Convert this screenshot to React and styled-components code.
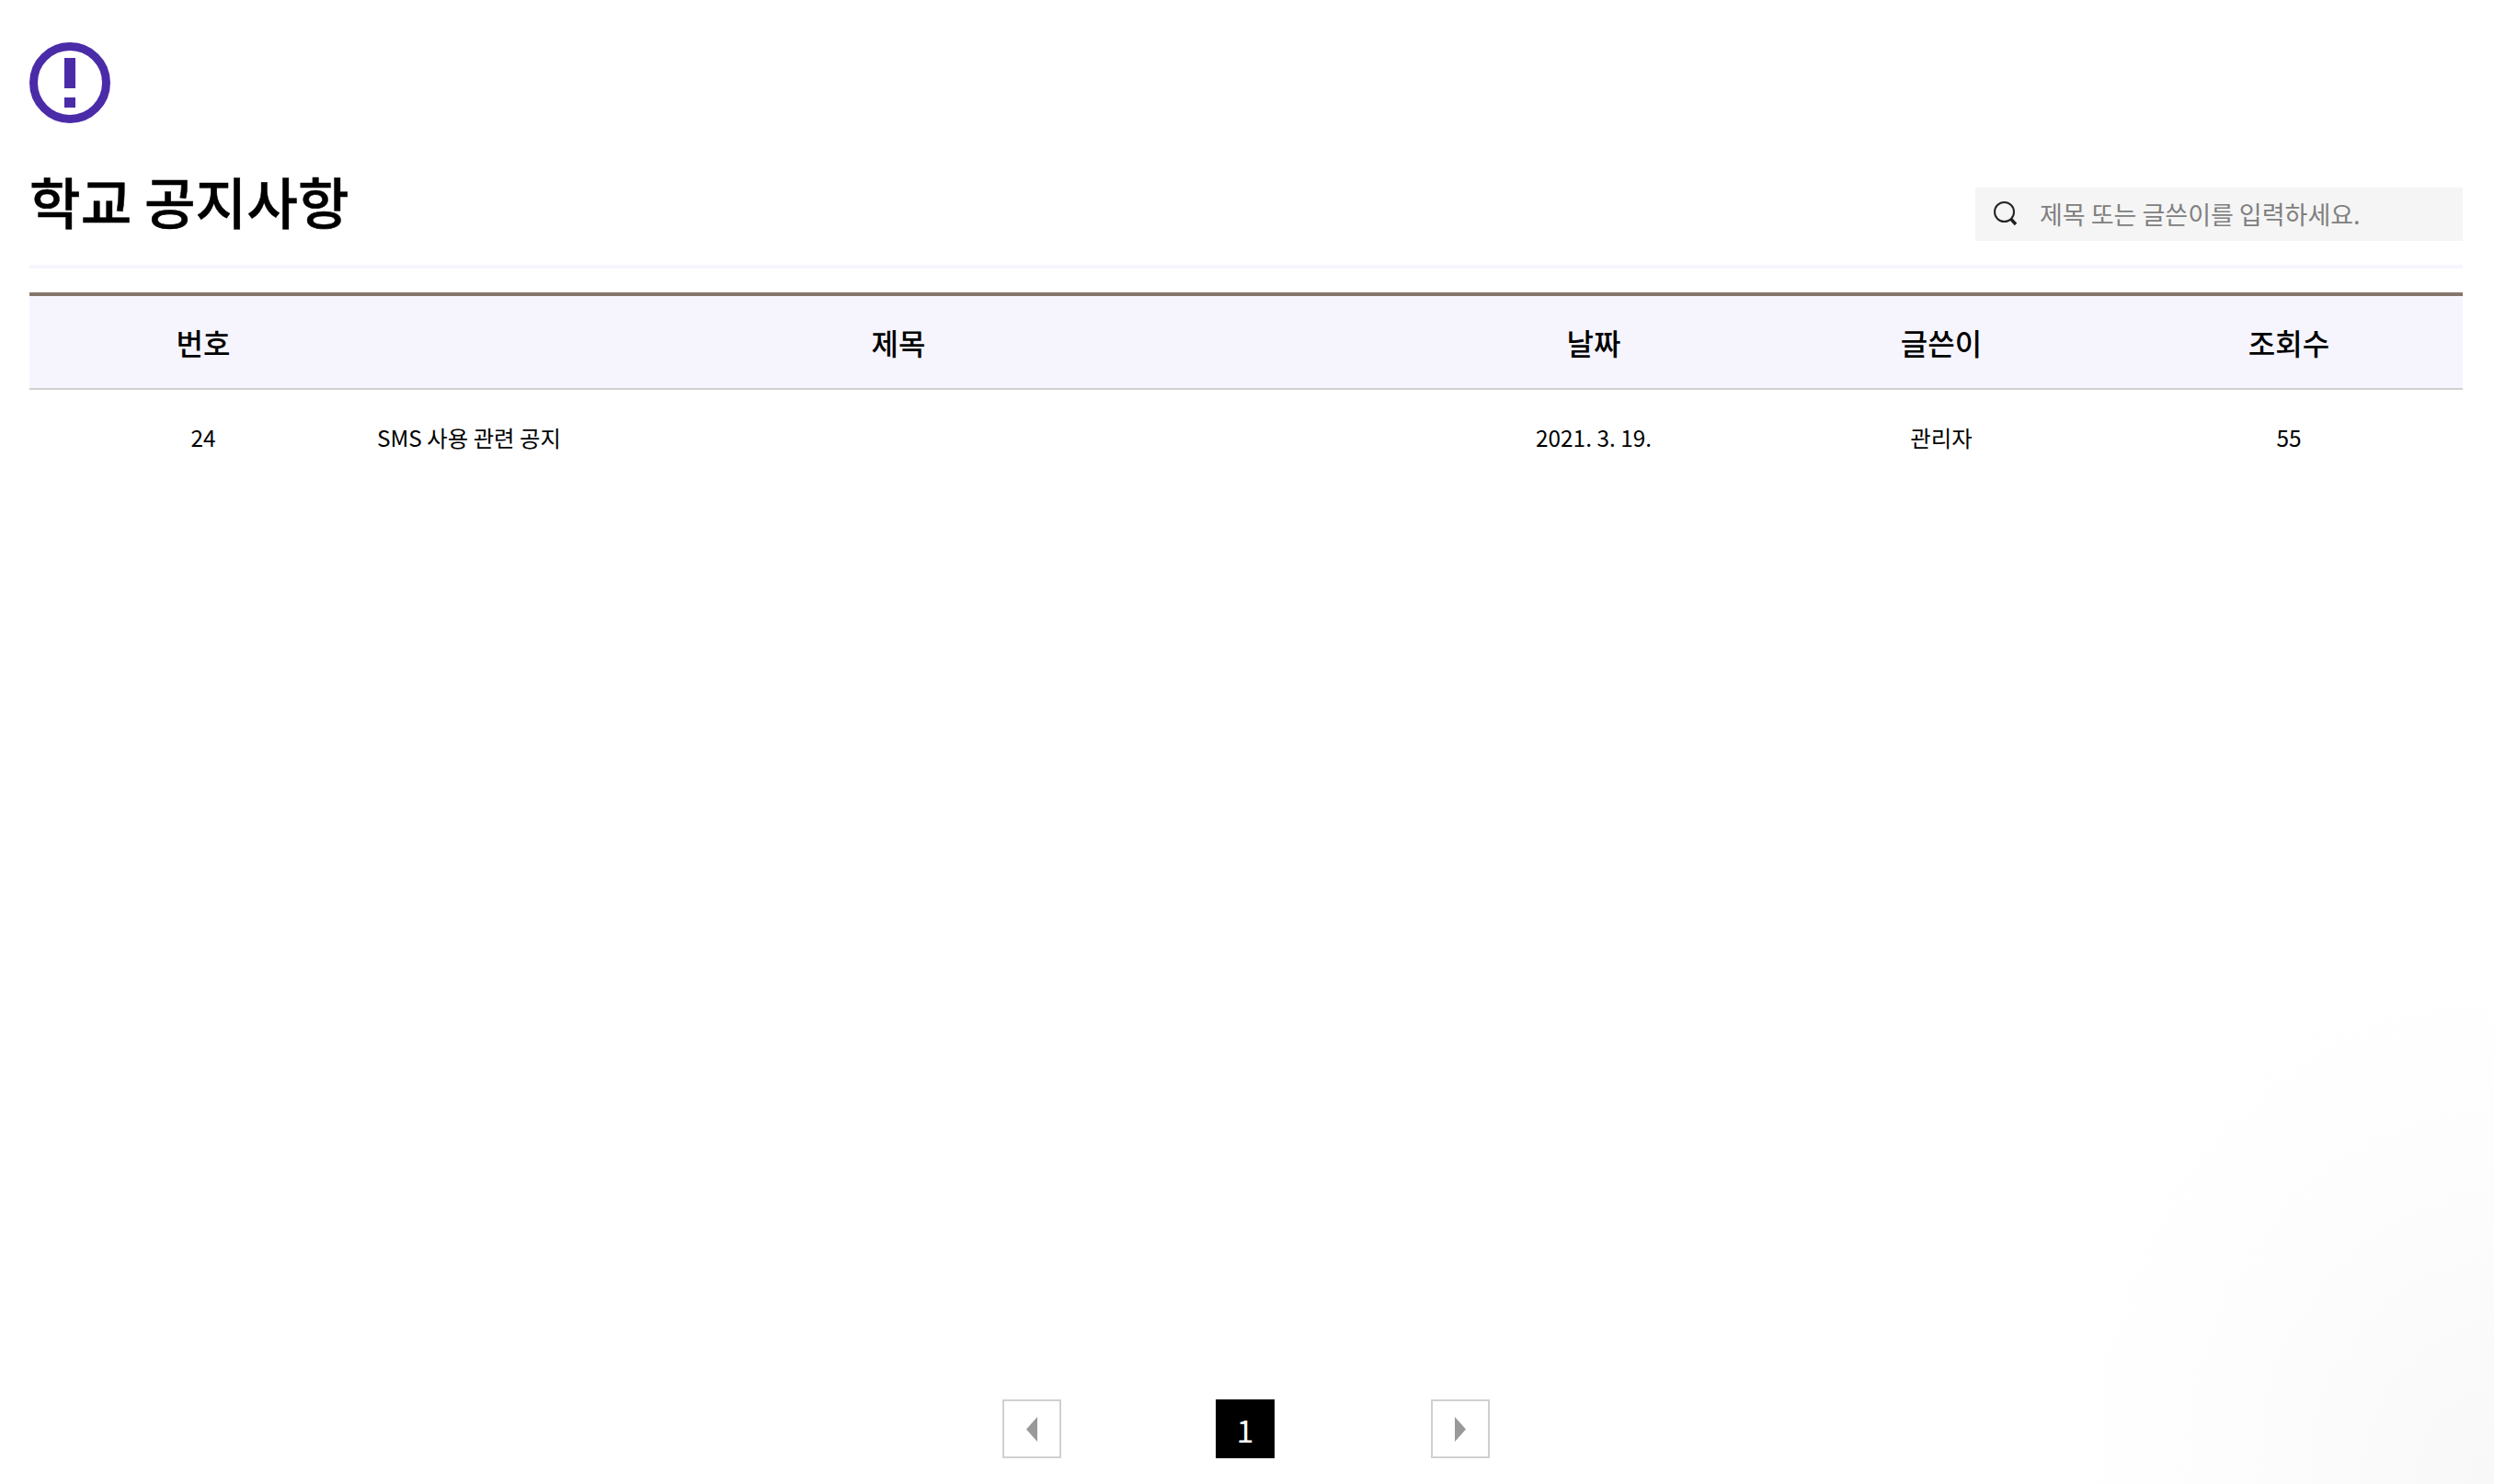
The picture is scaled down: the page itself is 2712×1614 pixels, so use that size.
import React from 'react';
import styled, { createGlobalStyle } from 'styled-components';

const GlobalStyle = createGlobalStyle`
  html, body {
    margin: 0;
    padding: 0;
    background: #fff;
  }
  * {
    box-sizing: border-box;
  }
`;

const columns = ['번호', '제목', '날짜', '글쓴이', '조회수'];

const notices = [
  { id: 24, title: 'SMS 사용 관련 공지', date: '2021. 3. 19.', author: '관리자', views: 55 },
];

const App = () => {
  return (
    <Page>
      <GlobalStyle />
      <NoticeIcon viewBox="0 0 88 88">
        <circle cx="44" cy="44" r="39.5" fill="none" stroke="#4a2ca8" strokeWidth="9" />
        <rect x="38" y="17" width="12" height="33" fill="#4a2ca8" />
        <rect x="38" y="60" width="12" height="11" fill="#4a2ca8" />
      </NoticeIcon>
      <TitleRow>
        <Title>학교 공지사항</Title>
        <SearchBox>
          <SearchIcon viewBox="0 0 28 28">
            <circle cx="12.5" cy="12.5" r="10.5" fill="none" stroke="#222" strokeWidth="2" />
            <path d="M19.5 20 L25 26" stroke="#222" strokeWidth="3.4" />
          </SearchIcon>
          <SearchInput placeholder="제목 또는 글쓴이를 입력하세요." />
        </SearchBox>
      </TitleRow>
      <Table>
        <HeadRow>
          {columns.map((name) => (
            <HeadCell key={name}>{name}</HeadCell>
          ))}
        </HeadRow>
        {notices.map((notice) => (
          <Row key={notice.id}>
            <Cell>{notice.id}</Cell>
            <Cell $left>{notice.title}</Cell>
            <Cell>{notice.date}</Cell>
            <Cell>{notice.author}</Cell>
            <Cell>{notice.views}</Cell>
          </Row>
        ))}
      </Table>
      <Pagination>
        <ArrowButton aria-label="이전">
          <svg width="12" height="27" viewBox="0 0 12 27">
            <path d="M12 0 V27 L0 13.5 Z" fill="#999" />
          </svg>
        </ArrowButton>
        <PageButton>1</PageButton>
        <ArrowButton aria-label="다음">
          <svg width="12" height="27" viewBox="0 0 12 27">
            <path d="M0 0 V27 L12 13.5 Z" fill="#999" />
          </svg>
        </ArrowButton>
      </Pagination>
    </Page>
  );
};

export default App;

// Styled Components
const Page = styled.div`
  display: flex;
  flex-direction: column;
  min-height: 100vh;
  padding: 46px 34px 28px 32px;
  font-family: 'Noto Sans CJK KR', 'Noto Sans', sans-serif;
  color: #000;
  background: radial-gradient(ellipse 480px 580px at 100% 100%, #f8f8f8 0%, #fdfdfd 60%, #fff 100%);
`;

const NoticeIcon = styled.svg`
  display: block;
  width: 88px;
  height: 88px;
`;

const TitleRow = styled.div`
  display: flex;
  align-items: flex-end;
  justify-content: space-between;
  height: 158px;
  padding-bottom: 26px;
  border-bottom: 4px solid #f6f5fe;
`;

const Title = styled.h1`
  margin: 0;
  font-size: 60.5px;
  font-weight: 500;
  line-height: 88px;
  letter-spacing: 0;
  -webkit-text-stroke: 0.5px #000;
`;

const SearchBox = styled.div`
  display: flex;
  align-items: center;
  width: 530px;
  height: 58px;
  padding: 0 0 2px 19px;
  background: #f5f5f5;
`;

const SearchIcon = styled.svg`
  flex: none;
  width: 28px;
  height: 28px;
`;

const SearchInput = styled.input`
  flex: 1;
  min-width: 0;
  margin-left: 23px;
  padding: 0;
  border: 0;
  outline: 0;
  background: transparent;
  font-family: inherit;
  font-size: 27px;
  color: #000;

  &::placeholder {
    color: #808080;
    opacity: 1;
  }
`;

const Table = styled.div`
  margin-top: 26px;
  border-top: 4px solid #85766c;
`;

const HeadRow = styled.div`
  display: grid;
  grid-template-columns: 1fr 3fr 1fr 1fr 1fr;
  height: 102px;
  background: #f6f5fe;
  border-bottom: 2px solid #d0d0d0;
`;

const HeadCell = styled.div`
  display: flex;
  align-items: center;
  justify-content: center;
  font-size: 32px;
  font-weight: 500;
`;

const Row = styled.div`
  display: grid;
  grid-template-columns: 1fr 3fr 1fr 1fr 1fr;
  height: 102px;
`;

const Cell = styled.div`
  display: flex;
  align-items: center;
  justify-content: ${(props) => (props.$left ? 'flex-start' : 'center')};
  font-size: 24.4px;
`;

const Pagination = styled.div`
  display: flex;
  justify-content: center;
  gap: 168px;
  margin-top: auto;
`;

const ArrowButton = styled.button`
  display: flex;
  align-items: center;
  justify-content: center;
  width: 64px;
  height: 64px;
  padding: 0;
  border: 2px solid #d0d0d0;
  background: #fff;
`;

const PageButton = styled.button`
  width: 64px;
  height: 64px;
  margin-right: 2px;
  padding: 0;
  border: 0;
  background: #000;
  color: #fff;
  font-family: inherit;
  font-size: 34px;
  font-weight: 400;
`;
